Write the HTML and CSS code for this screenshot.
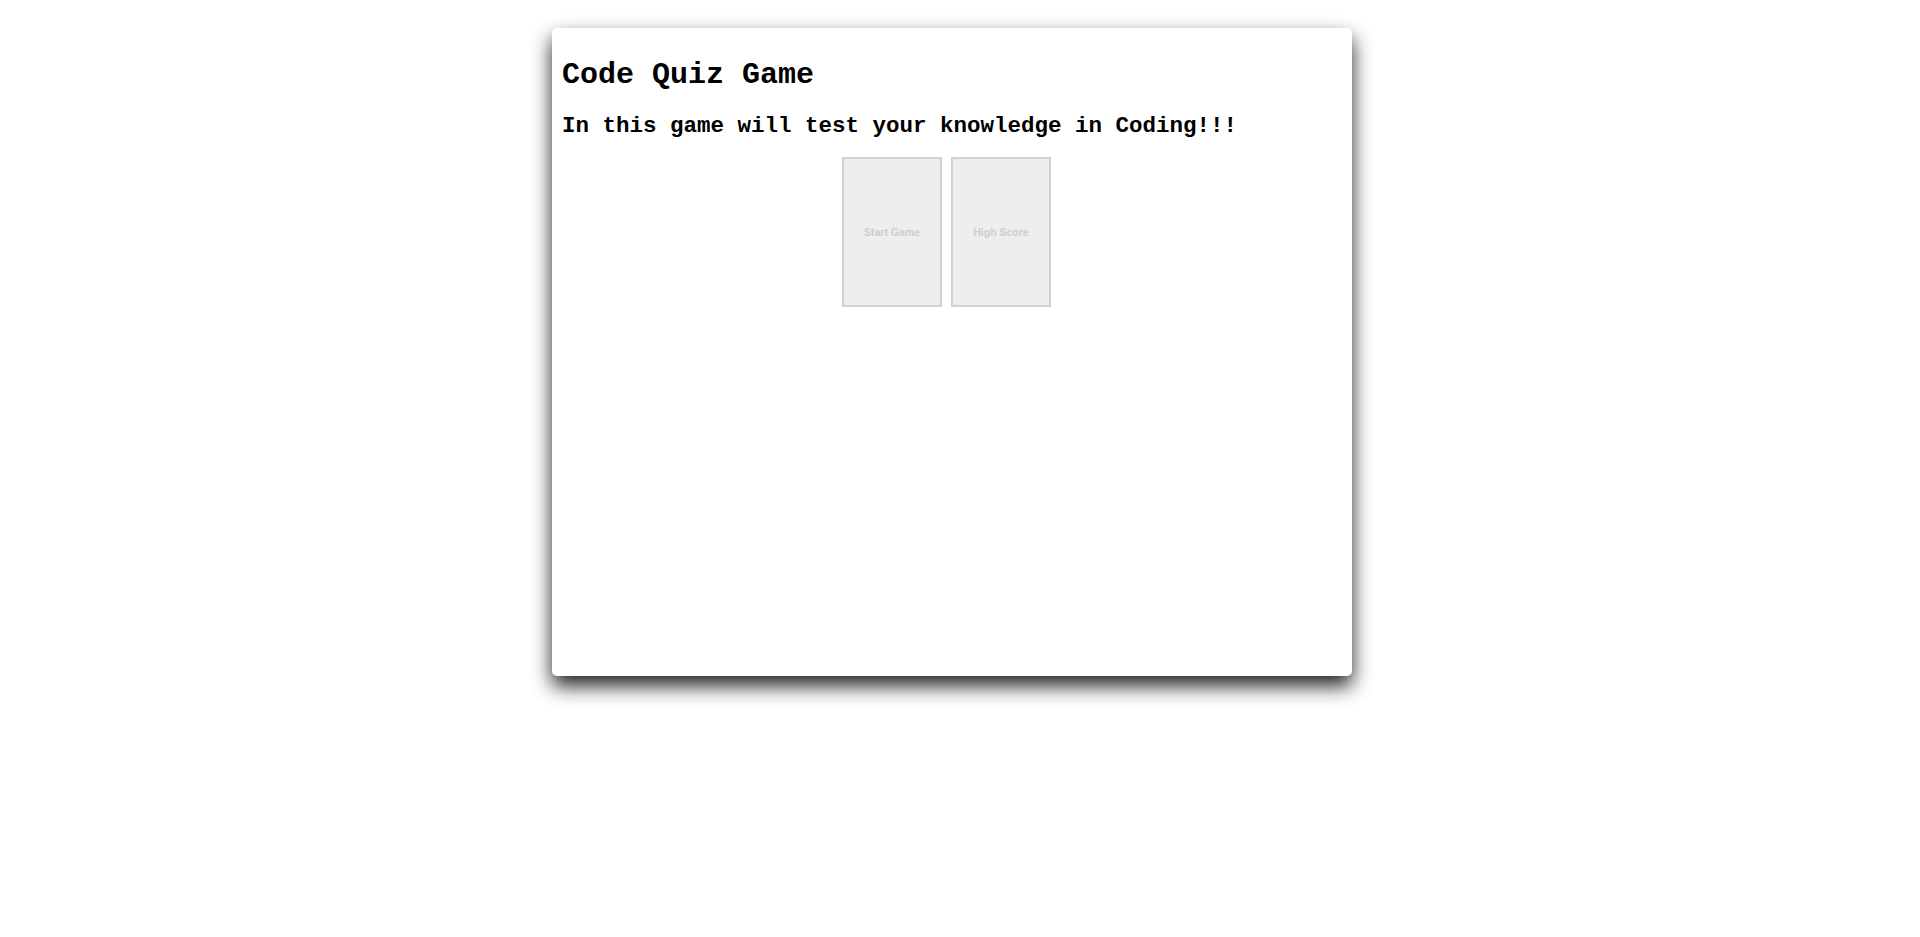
FILE: index.html
```html
<!DOCTYPE html>
<html>
<head>
<meta charset="utf-8">
<title>Code Quiz Game</title>
<link rel="stylesheet" href="styles.css">
</head>
<body>
<main class="card">
  <h1 class="title">Code Quiz Game</h1>
  <h2 class="subtitle">In this game will test your knowledge in Coding!!!</h2>
  <div class="actions">
    <button class="btn" disabled>Start Game</button>
    <button class="btn" disabled>High Score</button>
  </div>
</main>
</body>
</html>
```
FILE: styles.css
```css
html, body {
  margin: 0;
  padding: 0;
  background: #fff;
}
body {
  font-family: "Liberation Mono", "Courier New", monospace;
  color: #000;
  min-height: 100vh;
  padding-top: 28px;
  box-sizing: border-box;
}
.card {
  width: 800px;
  height: 648px;
  box-sizing: border-box;
  margin: 0 0 0 calc(50% - 408px);
  padding: 10px;
  background: #fff;
  border-radius: 5px;
  box-shadow: 0 10px 20px rgba(0, 0, 0, 0.87);
}
.title {
  font-size: 30px;
  font-weight: bold;
  margin: 20px 0 0;
}
.subtitle {
  font-size: 22.5px;
  font-weight: bold;
  margin: 21px 0 18px;
}
.actions {
  display: flex;
  justify-content: center;
  gap: 9px;
  padding-right: 11px;
}
.btn {
  width: 100px;
  height: 150px;
  box-sizing: border-box;
  border: 2px solid #d0d0d0;
  background: #eeeeee;
  color: #cdcdcd;
  font-family: "Liberation Sans", Arial, sans-serif;
  font-size: 10.5px;
  font-weight: bold;
  padding: 0;
  margin: 0;
}
```
